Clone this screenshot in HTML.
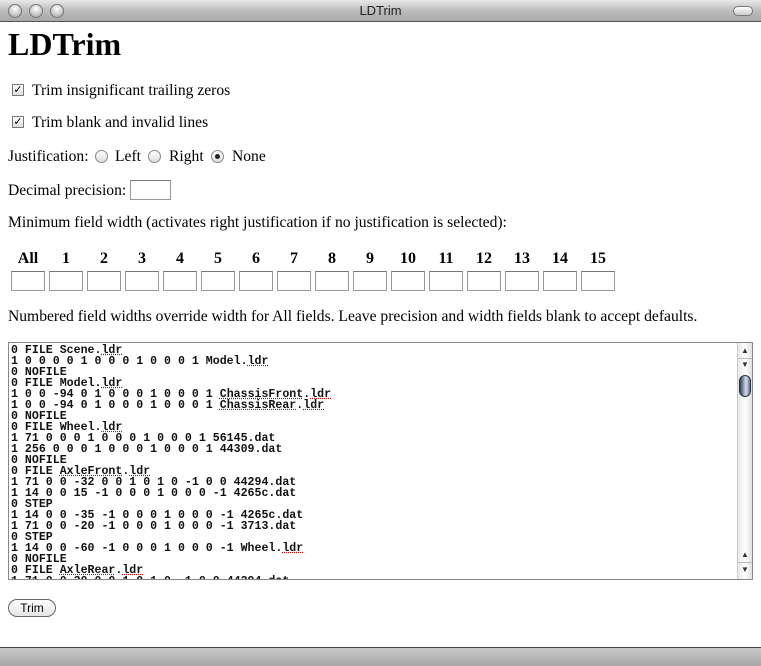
<!DOCTYPE html>
<html><head><meta charset="utf-8"><style>
*{margin:0;padding:0;box-sizing:border-box}
body{width:761px;height:666px;position:relative;background:#fff;font-family:"Liberation Serif",serif;font-size:15.6px;color:#000;overflow:hidden}
.a{position:absolute;white-space:nowrap}
#tb{left:0;top:0;width:761px;height:22px;background:linear-gradient(#e8e8e8,#bdbdbd 50%,#a8a8a8);border-bottom:1px solid #555}
.tl{position:absolute;top:4px;width:14px;height:14px;border-radius:50%;background:radial-gradient(circle at 50% 30%,#fff,#c8c8c8 60%,#9a9a9a);border:1px solid #777}
#ttl{left:0;width:761px;top:3px;text-align:center;font-family:"Liberation Sans",sans-serif;font-size:13px;color:#222}
.cb{position:absolute;width:12px;height:12px;border:1px solid #777;background:linear-gradient(#fff,#ddd);font-size:11px;line-height:10px;text-align:center;font-family:"DejaVu Sans",sans-serif}
.rd{position:absolute;width:13px;height:13px;border-radius:50%;border:1px solid #888;background:linear-gradient(#fff,#ddd)}
.inp{position:absolute;border:1px solid #999;border-top-color:#777;background:#fff;height:20px}
.h{position:absolute;font-weight:bold;font-size:16px;text-align:center;width:34px;top:250px}
#ta{left:8px;top:342px;width:745px;height:238px;border:1px solid #888;overflow:hidden}
#code{position:absolute;left:2px;top:2px;font-family:"Liberation Mono",monospace;font-size:11.6px;line-height:11px;white-space:pre;font-weight:bold;color:#111}
.u{text-decoration:underline dotted #d00}
#sb{position:absolute;right:0;top:0;width:15px;height:236px;background:linear-gradient(90deg,#e8e8e8,#fff 50%,#e0e0e0);border-left:1px solid #ccc}
#bb{left:0;top:647px;width:761px;height:19px;background:linear-gradient(#c8c8c8,#a8a8a8);border-top:1px solid #444}
</style></head><body>
<div id="tb" class="a"></div>
<div class="tl" style="left:8px"></div><div class="tl" style="left:29px"></div><div class="tl" style="left:50px"></div>
<div id="ttl" class="a">LDTrim</div>
<div class="a" style="right:8px;top:6px;width:20px;height:10px;border-radius:5px;border:1px solid #777;background:linear-gradient(#fff,#ccc)"></div>

<div class="a" style="left:8px;top:26px;font-size:32px;font-weight:bold">LDTrim</div>
<div class="cb" style="left:12px;top:84px">✓</div><div class="a" style="left:32px;top:82px">Trim insignificant trailing zeros</div>
<div class="cb" style="left:12px;top:116px">✓</div><div class="a" style="left:32px;top:114px">Trim blank and invalid lines</div>
<div class="a" style="left:8px;top:148px">Justification:</div>
<div class="rd" style="left:95px;top:150px"></div><div class="a" style="left:115px;top:148px">Left</div>
<div class="rd" style="left:148px;top:150px"></div><div class="a" style="left:169px;top:148px">Right</div>
<div class="rd" style="left:211px;top:150px"><div style="position:absolute;left:3px;top:3px;width:5px;height:5px;border-radius:50%;background:#222"></div></div><div class="a" style="left:232px;top:148px">None</div>
<div class="a" style="left:8px;top:182px">Decimal precision:</div>
<div class="inp" style="left:130px;top:180px;width:41px"></div>
<div class="a" style="left:8px;top:214px">Minimum field width (activates right justification if no justification is selected):</div>

<div class="h" style="left:11px">All</div><div class="h" style="left:49px">1</div><div class="h" style="left:87px">2</div><div class="h" style="left:125px">3</div><div class="h" style="left:163px">4</div><div class="h" style="left:201px">5</div><div class="h" style="left:239px">6</div><div class="h" style="left:277px">7</div><div class="h" style="left:315px">8</div><div class="h" style="left:353px">9</div><div class="h" style="left:391px">10</div><div class="h" style="left:429px">11</div><div class="h" style="left:467px">12</div><div class="h" style="left:505px">13</div><div class="h" style="left:543px">14</div><div class="h" style="left:581px">15</div>
<div class="inp" style="left:11px;top:271px;width:34px"></div><div class="inp" style="left:49px;top:271px;width:34px"></div><div class="inp" style="left:87px;top:271px;width:34px"></div><div class="inp" style="left:125px;top:271px;width:34px"></div><div class="inp" style="left:163px;top:271px;width:34px"></div><div class="inp" style="left:201px;top:271px;width:34px"></div><div class="inp" style="left:239px;top:271px;width:34px"></div><div class="inp" style="left:277px;top:271px;width:34px"></div><div class="inp" style="left:315px;top:271px;width:34px"></div><div class="inp" style="left:353px;top:271px;width:34px"></div><div class="inp" style="left:391px;top:271px;width:34px"></div><div class="inp" style="left:429px;top:271px;width:34px"></div><div class="inp" style="left:467px;top:271px;width:34px"></div><div class="inp" style="left:505px;top:271px;width:34px"></div><div class="inp" style="left:543px;top:271px;width:34px"></div><div class="inp" style="left:581px;top:271px;width:34px"></div>

<div class="a" style="left:8px;top:308px">Numbered field widths override width for All fields. Leave precision and width fields blank to accept defaults.</div>

<div id="ta" class="a"><div id="code">0 FILE Scene.<span class="u">ldr</span>
1 0 0 0 0 1 0 0 0 1 0 0 0 1 Model.<span class="u">ldr</span>
0 NOFILE
0 FILE Model.<span class="u">ldr</span>
1 0 0 -94 0 1 0 0 0 1 0 0 0 1 <span class="u">ChassisFront</span>.<span class="u">ldr</span>
1 0 0 -94 0 1 0 0 0 1 0 0 0 1 <span class="u">ChassisRear</span>.<span class="u">ldr</span>
0 NOFILE
0 FILE Wheel.<span class="u">ldr</span>
1 71 0 0 0 1 0 0 0 1 0 0 0 1 56145.dat
1 256 0 0 0 1 0 0 0 1 0 0 0 1 44309.dat
0 NOFILE
0 FILE <span class="u">AxleFront</span>.<span class="u">ldr</span>
1 71 0 0 -32 0 0 1 0 1 0 -1 0 0 44294.dat
1 14 0 0 15 -1 0 0 0 1 0 0 0 -1 4265c.dat
0 STEP
1 14 0 0 -35 -1 0 0 0 1 0 0 0 -1 4265c.dat
1 71 0 0 -20 -1 0 0 0 1 0 0 0 -1 3713.dat
0 STEP
1 14 0 0 -60 -1 0 0 0 1 0 0 0 -1 Wheel.<span class="u">ldr</span>
0 NOFILE
0 FILE <span class="u">AxleRear</span>.<span class="u">ldr</span>
1 71 0 0 30 0 0 1 0 1 0 -1 0 0 44294.dat</div>
<div id="sb">
<div style="position:absolute;left:3px;top:3px;font-size:8px;color:#333">▲</div>
<div style="position:absolute;left:0;top:15px;width:15px;border-top:1px solid #bbb"></div>
<div style="position:absolute;left:3px;top:17px;font-size:8px;color:#333">▼</div>
<div style="position:absolute;left:1px;top:32px;width:12px;height:22px;border-radius:6px;background:linear-gradient(90deg,#345,#9ab 40%,#dde 60%,#678);border:1px solid #234"></div>
<div style="position:absolute;left:3px;top:207px;font-size:8px;color:#333">▲</div>
<div style="position:absolute;left:0;top:219px;width:15px;border-top:1px solid #bbb"></div>
<div style="position:absolute;left:3px;top:222px;font-size:8px;color:#333">▼</div>
</div></div>

<div class="a" style="left:8px;top:599px;width:48px;height:18px;border:1px solid #666;border-radius:9px;background:linear-gradient(#fff,#e4e4e4);font-family:'Liberation Sans',sans-serif;font-size:12px;text-align:center;line-height:16px">Trim</div>
<div id="bb" class="a"></div>
</body></html>
